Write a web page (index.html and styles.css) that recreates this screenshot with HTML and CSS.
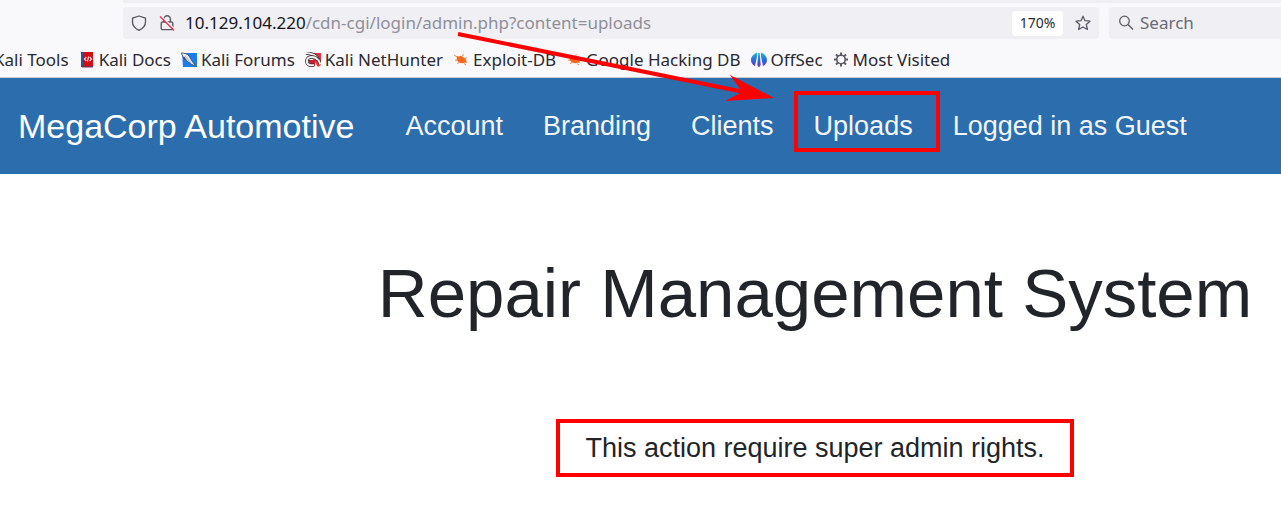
FILE: index.html
```html
<!DOCTYPE html>
<html lang="en">
<head>
<meta charset="utf-8">
<title>Repair Management System</title>
<link rel="stylesheet" href="styles.css">
</head>
<body>
<header class="browser">
  <div class="tab-edge"></div>
  <div class="toolbar">
    <div class="address">
      <svg class="icon" viewBox="0 0 16 16"><path d="M8 1 14.500 3.200V7c0 3.900-2.800 6.600-6.500 8.300C4.300 13.600 1.500 10.900 1.500 7V3.200Z" fill="none" stroke="#55555d" stroke-width="1.300" stroke-linejoin="round"/></svg>
      <svg class="icon" viewBox="0 0 16 16"><path d="M5 7V4a3.200 3.200 0 0 1 6.400 0v3M3.500 7h9a1.300 1.300 0 0 1 1.300 1.300v5a1.300 1.300 0 0 1-1.300 1.300h-9a1.300 1.300 0 0 1-1.300-1.300v-5A1.300 1.300 0 0 1 3.500 7Z" fill="none" stroke="#5b5b66" stroke-width="1.400"/><path d="m2 1 13.500 13" stroke="#f0f0f4" stroke-width="1.500"/><path d="m1 1.500 14 14" stroke="#ef2b52" stroke-width="1.300"/></svg>
      <div class="url" role="textbox" contenteditable="true" spellcheck="false" aria-label="Address"><span class="host">10.129.104.220</span>/cdn-cgi/login/admin.php?content=uploads</div>
      <button class="zoom" type="button">170%</button>
      <button class="star" type="button" aria-label="Bookmark this page"><svg class="icon" viewBox="0 0 16 16"><path d="m8 1.200 2 4.500 5 .5-3.700 3.300 1.100 5L8 12l-4.400 2.500 1.100-5L1 6.200l5-.5Z" fill="none" stroke="#5b5b66" stroke-width="1.300" stroke-linejoin="round"/></svg></button>
    </div>
    <label class="search">
      <svg class="icon" viewBox="0 0 16 16"><circle cx="6.500" cy="6" r="4.800" fill="none" stroke="#5b5b66" stroke-width="1.300"/><path d="m10 9.500 5 5" stroke="#5b5b66" stroke-width="1.400"/></svg>
      <input class="search-input" type="text" placeholder="Search" aria-label="Search">
    </label>
  </div>
  <nav class="bookmarks" aria-label="Bookmarks">
    <a class="bookmark" href="#">Kali Tools</a>
    <a class="bookmark" href="#"><svg class="icon" viewBox="0 0 16 16"><path d="M2 0h3v15H2z" fill="#28559b"/><path d="M4 0h10v14H4z" fill="#d20d14"/><path d="M3 14h11v1.500H3z" fill="#7a3550"/><path d="M7.300 5 5.500 7l1.800 2m3.400-4 1.800 2-1.800 2M9.500 4.500 8.500 9.500" fill="none" stroke="#fff" stroke-width="1.100"/></svg>Kali Docs</a>
    <a class="bookmark" href="#"><svg class="icon" viewBox="0 0 16 16"><path d="M1 1h15v14H2Z" fill="#1c7cf2"/><path d="M0 1c3 0 6 .5 8 3l3 5 4 5.500-5-2.500-4-3-3-4 1 3Z" fill="#e4e9ef" stroke="#3a4654" stroke-width=".8"/><path d="m4 4 6 7" stroke="#8b97a4" stroke-width=".7"/></svg>Kali Forums</a>
    <a class="bookmark" href="#"><svg class="icon" viewBox="0 0 16 16"><path d="M4 1h12v12l-3 2Z" fill="#f0303f"/><path d="M3 8h7v6H5Z" fill="#c91f34"/><path d="M1 1c6 .5 10 2 12 6l2.500 5.500" fill="none" stroke="#302a30" stroke-width="3.400"/><path d="M1 1c6 .5 10 2 12 6l2.500 5.500" fill="none" stroke="#f3eded" stroke-width="2"/><path d="M13 8C10 4 3 4 2 8s2 6 7 5" fill="none" stroke="#302a30" stroke-width="3.400"/><path d="M13 8C10 4 3 4 2 8s2 6 7 5" fill="none" stroke="#f3eded" stroke-width="2"/></svg>Kali NetHunter</a>
    <a class="bookmark" href="#"><svg class="icon" viewBox="0 0 16 16"><path d="m3 4 3 .5 2-.8 3 1.800 2 2 .8 3.500-2-.5-1.800.8L7 11l-2-1.500L3.500 7.500 4 6Z" fill="#f4671f"/><path d="m1 3 3 2M2 8l3 .5m1 2-2 1m7 0 2 1.500M9 4l2-1.500m1 4 2-1" stroke="#f4874d"/></svg>Exploit-DB</a>
    <a class="bookmark" href="#"><svg class="icon" viewBox="0 0 16 16"><path d="m3 4 3 .5 2-.8 3 1.800 2 2 .8 3.500-2-.5-1.800.8L7 11l-2-1.500L3.500 7.500 4 6Z" fill="#f4671f"/><path d="m1 3 3 2M2 8l3 .5m1 2-2 1m7 0 2 1.500M9 4l2-1.500m1 4 2-1" stroke="#f4874d"/></svg>Google Hacking DB</a>
    <a class="bookmark" href="#"><svg class="icon" viewBox="0 0 16 16"><defs><linearGradient id="sec" x2="0" y2="1"><stop stop-color="#25bfd2"/><stop offset=".5" stop-color="#296bd8"/><stop offset="1" stop-color="#792dce"/></linearGradient></defs><path d="M6 .5v4L4 14Q0 12 0 8 0 3 6 .5m4 0v4L12 14q4-2 4-6 0-5-6-7.500M7.300 1h1.400l1 12L8 15.500 6.300 13Z" fill="url(#sec)"/></svg>OffSec</a>
    <a class="bookmark" href="#"><svg class="icon" viewBox="0 0 16 16"><circle cx="8" cy="7.500" r="4.200" fill="none" stroke="#5b5b66" stroke-width="1.600"/><path d="M8 .5v3m0 8v3M1 7.500h3m8 0h3M3 2.500l2 2m6 6 2 2m0-10-2 2m-6 6-2 2" stroke="#5b5b66" stroke-width="2"/></svg>Most Visited</a>
  </nav>
</header>
<nav class="site-nav" aria-label="Main">
  <a class="brand" href="#">MegaCorp Automotive</a>
  <a class="nav-link" href="#">Account</a>
  <a class="nav-link" href="#">Branding</a>
  <a class="nav-link" href="#">Clients</a>
  <a class="nav-link marked" href="#">Uploads</a>
  <a class="nav-link" href="#">Logged in as Guest</a>
</nav>
<main class="content">
  <h1 class="title">Repair Management System</h1>
  <p class="message">This action require super admin rights.</p>
</main>
<svg class="arrow" width="320" height="72" viewBox="0 0 320 72" aria-hidden="true"><path d="m1 4 286 58" stroke="#f00" stroke-width="4"/><path d="m273 45 44 23-49 3 17-9Z" fill="#f00"/></svg>
</body>
</html>
```
FILE: styles.css
```css
* { box-sizing: border-box; }
body {
  margin: 0;
  background: #fff;
  color: #212529;
  font-family: "Liberation Sans", Arial, sans-serif;
  overflow-x: hidden;
}
a { color: inherit; text-decoration: none; }
button { border: 0; font: inherit; color: inherit; cursor: pointer; }
.icon { width: 16px; height: 16px; flex: none; }
.browser {
  background: #f9f9fb;
  border-bottom: 1px solid #ccccd0;
  color: #2a2930;
  font-family: "Noto Sans", sans-serif;
  font-size: 17px;
  line-height: 24px;
}
.tab-edge {
  height: 3px;
  margin-left: 123px;
  background: #f0f0f4;
}
.toolbar {
  display: flex;
  gap: 10px;
  padding: 4px 0 4px 123px;
}
.address {
  flex: 1;
  display: flex;
  align-items: center;
  height: 32px;
  padding: 0 8px;
  gap: 12px;
  border-radius: 4px;
  background: #f0f0f4;
}
.url {
  flex: 1;
  margin-left: -2px;
  color: #8f8f98;
  white-space: nowrap;
  outline: none;
}
.host { color: #15141a; }
.zoom {
  width: 51px;
  height: 25px;
  padding: 0;
  border-radius: 4px;
  background: #fff;
  font-size: 14px;
}
.star { display: flex; padding: 0; background: none; }
.search {
  display: flex;
  align-items: center;
  gap: 6px;
  width: 172px;
  padding-left: 9px;
  border-radius: 4px 0 0 4px;
  background: #f0f0f4;
}
.search-input {
  width: 100%;
  min-width: 0;
  padding: 0;
  border: 0;
  background: none;
  font: inherit;
  outline: none;
}
.search-input::placeholder { color: #6b6b73; opacity: 1; }
.bookmarks {
  display: flex;
  align-items: center;
  gap: 10px;
  height: 34px;
  margin-left: -6px;
  white-space: nowrap;
}
.bookmark { display: flex; align-items: center; gap: 4px; }
.site-nav {
  display: flex;
  align-items: center;
  height: 96px;
  padding-left: 18px;
  background: #2c6dad;
  color: #f2f6fa;
  font-size: 27px;
  white-space: nowrap;
}
.brand {
  margin-right: 31px;
  color: #fff;
  font-size: 34px;
}
.nav-link { padding: 0 20px; }
.marked { position: relative; }
.marked::after {
  content: "";
  position: absolute;
  inset: -20px -7px -10px 0;
  border: 4px solid #f00;
}
.content {
  display: flex;
  flex-direction: column;
  align-items: center;
  padding: 79px 0 54px 349px;
}
.title {
  margin: 0 0 84px;
  font-size: 69px;
  font-weight: 400;
  line-height: 82px;
  white-space: nowrap;
}
.message {
  margin: 0;
  padding: 8px 25px;
  border: 4px solid #f00;
  font-size: 27px;
  line-height: 34px;
  white-space: nowrap;
}
.arrow {
  position: absolute;
  top: 30px;
  left: 457px;
  pointer-events: none;
}
```
